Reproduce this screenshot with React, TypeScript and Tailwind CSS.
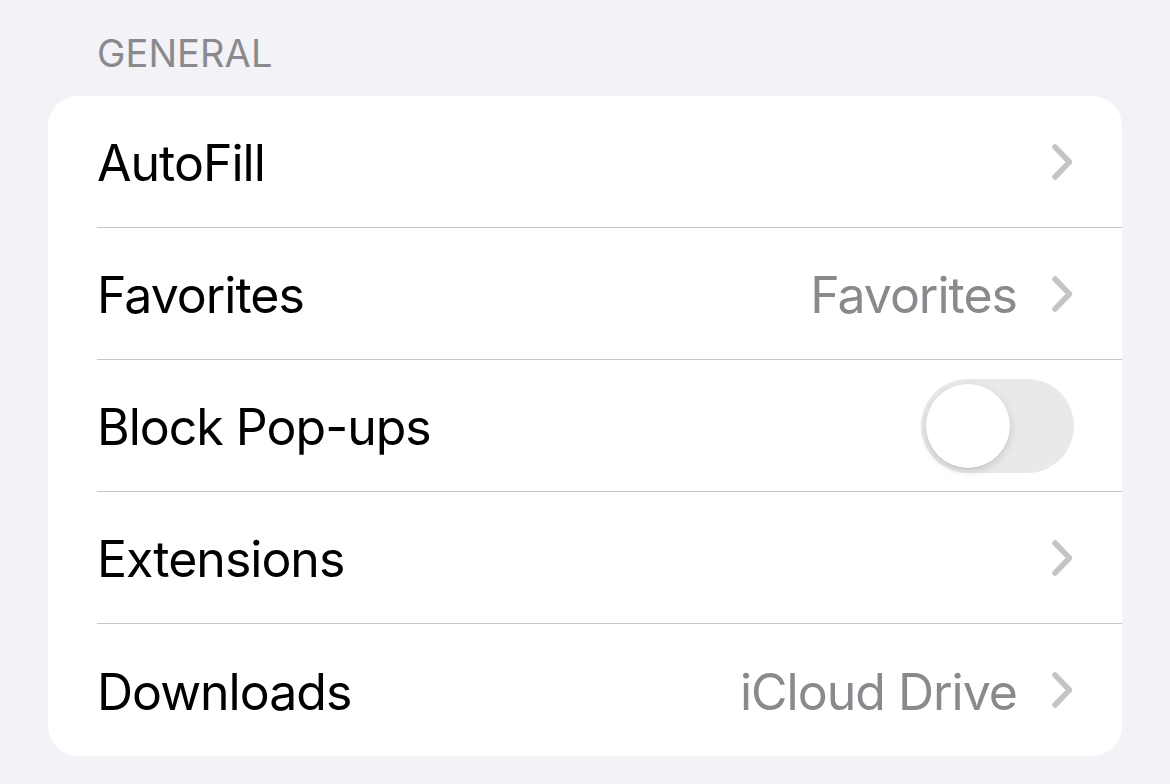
type Row =
  | { label: string; kind: "link"; value?: string }
  | { label: string; kind: "toggle"; on: boolean };

const ROWS: Row[] = [
  { label: "AutoFill", kind: "link" },
  { label: "Favorites", kind: "link", value: "Favorites" },
  { label: "Block Pop-ups", kind: "toggle", on: false },
  { label: "Extensions", kind: "link" },
  { label: "Downloads", kind: "link", value: "iCloud Drive" },
];

function Chevron() {
  return (
    <svg width="22" height="38" viewBox="0 0 22 38" fill="none">
      <path
        d="M4 4 L18.5 19 L4 34"
        stroke="#c4c4c7"
        strokeWidth="5.5"
        strokeLinecap="round"
        strokeLinejoin="round"
      />
    </svg>
  );
}

function Toggle({ on }: { on: boolean }) {
  return (
    <div
      className={`flex h-[94px] w-[153px] items-center rounded-full p-[5px] ${
        on ? "justify-end bg-[#34c759]" : "justify-start bg-[#e9e9ea]"
      }`}
    >
      <div className="h-[84px] w-[84px] rounded-full bg-white shadow-[0_3px_8px_rgba(0,0,0,0.15),0_1px_1px_rgba(0,0,0,0.06)]" />
    </div>
  );
}

export default function App() {
  return (
    <div className="min-h-[784px] bg-[#f2f2f7] px-[48px] pt-[34px] font-['Inter',sans-serif]">
      <div className="pb-[23px] pl-[49px] text-[38px] leading-[39px] tracking-[0.1px] text-[#8a8a8e]">
        GENERAL
      </div>
      <div className="overflow-hidden rounded-[30px] bg-white">
        {ROWS.map((row, i) => (
          <div key={row.label} className="flex h-[132px] pl-[49px]">
            <div
              className={`flex flex-1 items-center ${
                row.kind === "toggle" ? "pr-[48px]" : "pr-[49px]"
              } ${i < ROWS.length - 1 ? "border-b border-[#c6c6c8]" : ""}`}
            >
              <span className="flex-1 pt-[4px] text-[50px] tracking-[-1px] text-black">
                {row.label}
              </span>
              {row.kind === "toggle" ? (
                <Toggle on={row.on} />
              ) : (
                <div className="flex items-center">
                  {row.value && (
                    <span className="mr-[34px] pt-[4px] text-[50px] tracking-[-1px] text-[#8a8a8e]">
                      {row.value}
                    </span>
                  )}
                  <Chevron />
                </div>
              )}
            </div>
          </div>
        ))}
      </div>
    </div>
  );
}
